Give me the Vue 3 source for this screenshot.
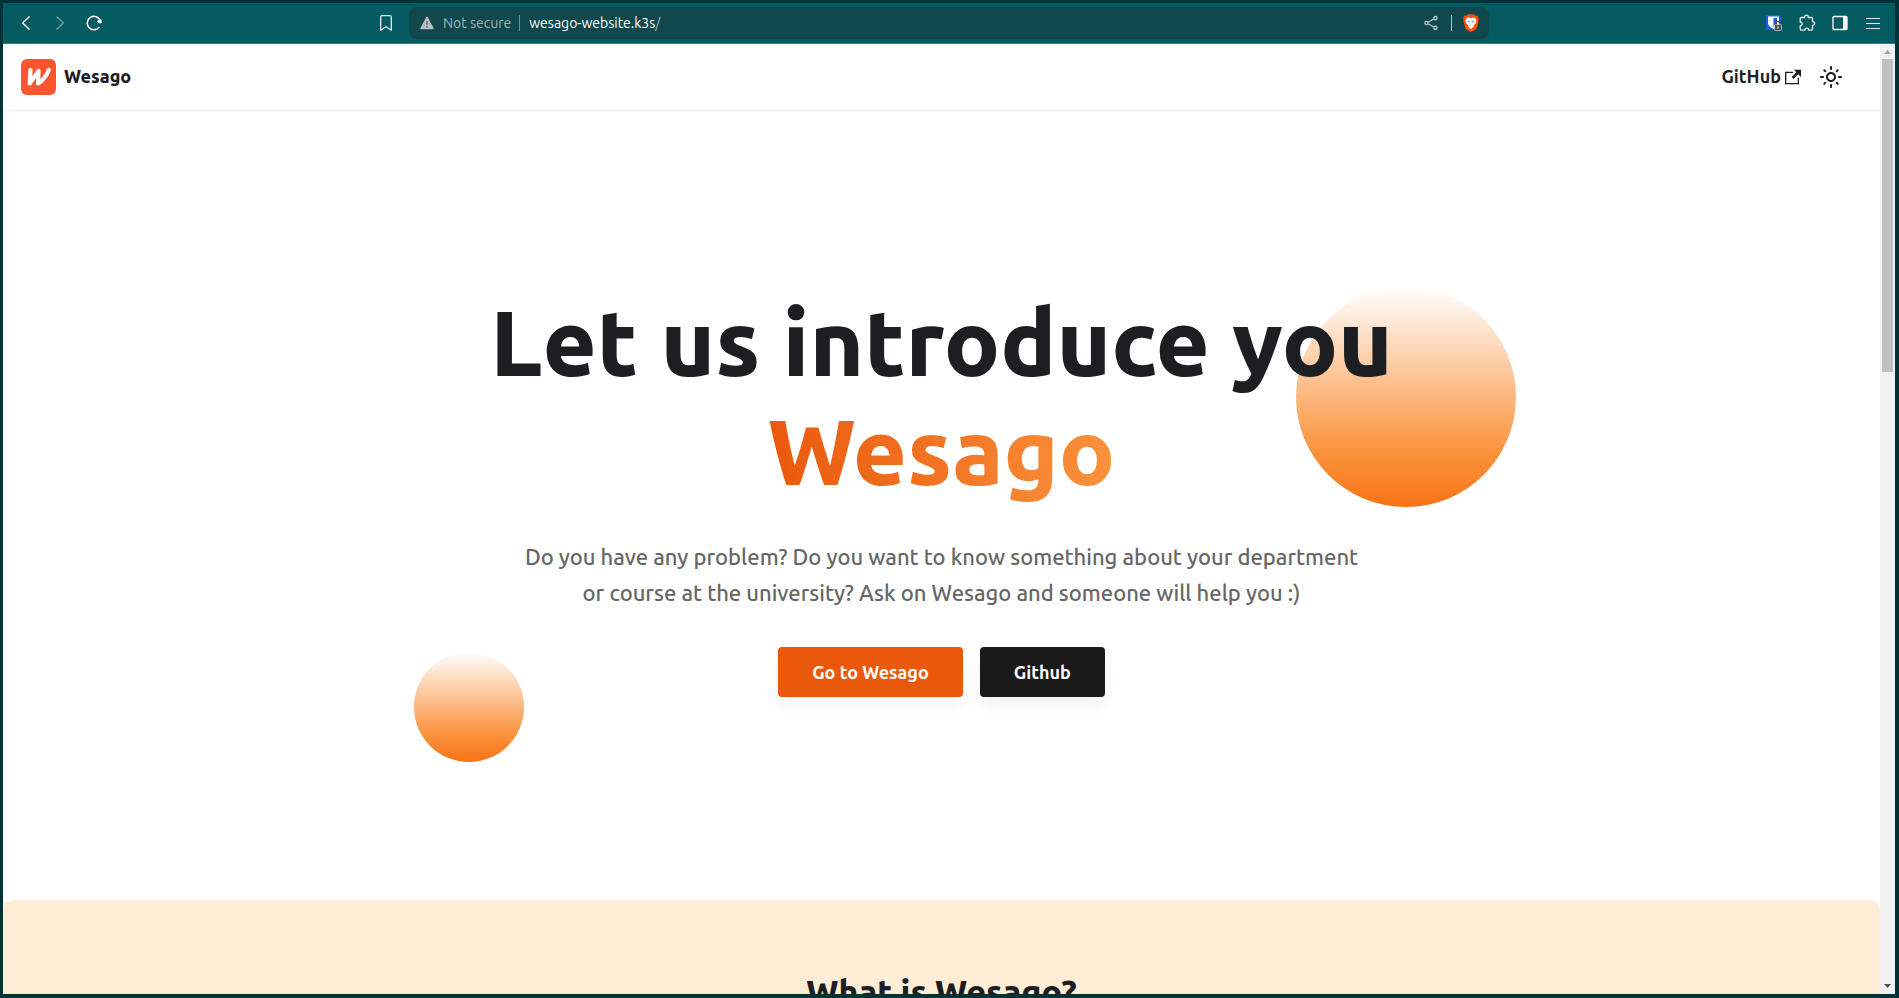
<script setup>
const pageTitle = 'Wesago'
const intro =
  'Do you have any problem? Do you want to know something about your department or course at the university? Ask on Wesago and someone will help you :)'
</script>

<template>
  <div class="window">
    <div class="toolbar">
      <div class="nav">
        <button type="button" aria-label="Back">
          <svg width="16" height="16" viewBox="0 0 16 16"><path d="M11.500 1.500 4.700 8l6.800 6.500" fill="none" stroke="#fff" stroke-width="1.500" /></svg>
        </button>
        <button type="button" aria-label="Forward" disabled>
          <svg width="16" height="16" viewBox="0 0 16 16"><path d="M4.500 1.500 11.300 8l-6.800 6.500" fill="none" stroke="#6f9da1" stroke-width="1.500" /></svg>
        </button>
        <button type="button" aria-label="Reload">
          <svg width="16" height="16" viewBox="0 0 16 16">
            <path d="M14.200 5.600A6.700 6.700 0 1 0 13.200 12.300" fill="none" stroke="#fff" stroke-width="1.500" />
            <path d="M11.500 6 14.800 4.300l.5 3.400-2.300.3z" fill="#fff" stroke="#fff" stroke-linejoin="round" />
          </svg>
        </button>
      </div>

      <div class="address-group">
        <button type="button" class="bookmark" aria-label="Bookmark this tab">
          <svg width="14" height="18" viewBox="0 0 14 18"><path d="M1.700 2.700q0-1 1-1h8.600q1 0 1 1v13.500L7 12.800l-5.300 3.400z" fill="none" stroke="#e4eeee" stroke-width="1.300" stroke-linejoin="round" /></svg>
        </button>
        <div class="address">
          <svg class="warn" width="14" height="14" viewBox="0 0 14 14">
            <path d="M7 1.400 13 12.500H1z" fill="#b9bfc0" stroke="#b9bfc0" stroke-width="1.500" stroke-linejoin="round" />
            <path d="M7 5v3.800M7 9.900v1.500" stroke="#5a6568" stroke-width="1.500" />
          </svg>
          <span class="insecure">Not secure</span>
          <span class="bar"></span>
          <span class="url">wesago-website.k3s<i>/</i></span>
          <button type="button" aria-label="Share">
            <svg width="14" height="16" viewBox="0 0 14 16" fill="none" stroke="#b7c6c8" stroke-width="1.300">
              <path d="M4 7.300 9.700 4M4 8.700l5.700 3.300" />
              <circle cx="2.400" cy="8" r="1.600" /><circle cx="11.400" cy="3.200" r="1.700" /><circle cx="11.400" cy="12.800" r="1.700" />
            </svg>
          </button>
          <span class="bar pale"></span>
          <button type="button" aria-label="Brave Shields">
            <svg width="16" height="18" viewBox="0 0 16 18">
              <path d="M5 .3h6l1.500 1.500 1.800-.3L15.900 4l-.5 1.300.4 1.300-1.900 7.200Q13.300 15 12 15.900L8 18l-4-2.100Q2.700 15 2.100 13.800L.2 6.600l.4-1.300L.1 4l1.600-2.500 1.800.3z" fill="#fb4f0b" />
              <path d="M4.600 3.500 8 4.100l3.400-.6 2.200 2.700-.7 1.500.3 1.400-2.600 2.500.3 1-2.900 2.700-2.900-2.700.3-1-2.600-2.500.3-1.400-.7-1.500z" fill="#fff" />
              <path d="m4.400 6.800 2.500.5-.4 1.500zM11.600 6.800l-2.500.5.4 1.500zM6.500 10.800l1.500.6 1.500-.6L8 12z" fill="#fb4f0b" />
            </svg>
          </button>
        </div>
      </div>

      <div class="extensions">
        <button type="button" aria-label="Password manager">
          <svg width="18" height="18" viewBox="0 0 18 18">
            <rect x="1" y="1" width="15" height="15" rx="1" fill="#175ddc" />
            <path d="M3 2.500h11V9c0 3-3 4.700-5.500 6C6 13.700 3 12 3 9z" fill="#fff" />
            <path d="M8.500 4H12v5c0 1.700-1.500 2.700-3.500 4z" fill="#175ddc" />
            <rect x="9.500" y="10.500" width="7" height="6" rx="1" fill="#505050" stroke="#ddd" stroke-width=".7" />
            <path d="M11.200 10.300V9.200a1.800 1.800 0 0 1 3.600 0v1.100" fill="none" stroke="#505050" stroke-width="1.300" />
            <path d="M13 12.500v2" stroke="#fff" />
          </svg>
        </button>
        <button type="button" aria-label="Extensions">
          <svg width="18" height="18" viewBox="0 0 18 18">
            <path d="M2.200 4.500q0-1 1-1h3.300c-.4-3 4.200-3 3.800 0h3.200q1 0 1 1v3.200c2.800-.1 2.800 3.800 0 3.700v3.700q0 1-1 1H10.700c.3-2.700-4-2.700-3.700 0H3.200q-1 0-1-1v-3.300c2.600.1 2.600-3.900 0-3.800z" fill="none" stroke="#e3eeee" stroke-width="1.300" stroke-linejoin="round" />
          </svg>
        </button>
        <button type="button" aria-label="Sidebar">
          <svg width="16" height="16" viewBox="0 0 16 16"><rect x="1" y="1.500" width="14" height="13" rx="1" fill="none" stroke="#fff" stroke-width="1.300" /><path d="M11 1h4v14h-4z" fill="#fff" /></svg>
        </button>
        <button type="button" aria-label="Menu">
          <svg width="14" height="14" viewBox="0 0 14 14"><path d="M0 2.500h14M0 7.500h14M0 12.500h14" stroke="#dbe8e9" stroke-width="1" /></svg>
        </button>
      </div>
    </div>

    <div class="viewport">
      <div class="page">
        <header class="site-header">
          <a class="brand" href="#">
            <svg width="35" height="36" viewBox="0 0 35 36">
              <rect width="35" height="36" rx="6" fill="#ff5630" />
              <path d="M9.500 11 8.600 24.500 17.500 12l-.4 12.500Q24 20.500 27.800 11" fill="none" stroke="#fff" stroke-width="4.200" stroke-linecap="round" stroke-linejoin="round" />
            </svg>
            <b>{{ pageTitle }}</b>
          </a>
          <nav>
            <a class="repo" href="#">
              <span>GitHub</span>
              <svg width="16" height="16" viewBox="0 0 24 24"><path fill="currentColor" d="M21 13v10h-21v-19h12v2h-10v15h17v-8h2zm3-12h-10.988l4.035 4-6.977 7.070 2.828 2.828 6.977-7.070 4.125 4.172v-11z" /></svg>
            </a>
            <button type="button" class="theme" aria-label="Switch between dark and light mode">
              <svg width="24" height="24" viewBox="0 0 24 24"><path fill="currentColor" d="M12,9c1.650,0,3,1.350,3,3s-1.350,3-3,3s-3-1.350-3-3S10.350,9,12,9 M12,7c-2.760,0-5,2.240-5,5s2.240,5,5,5s5-2.240,5-5 S14.760,7,12,7L12,7z M2,13l2,0c0.550,0,1-0.450,1-1s-0.450-1-1-1l-2,0c-0.550,0-1,0.450-1,1S1.450,13,2,13z M20,13l2,0c0.550,0,1-0.450,1-1 s-0.450-1-1-1l-2,0c-0.550,0-1,0.450-1,1S19.450,13,20,13z M11,2v2c0,0.550,0.450,1,1,1s1-0.450,1-1V2c0-0.550-0.450-1-1-1S11,1.450,11,2z M11,20v2c0,0.550,0.450,1,1,1s1-0.450,1-1v-2c0-0.550-0.450-1-1-1C11.450,19,11,19.450,11,20z M5.990,4.580c-0.390-0.390-1.030-0.390-1.410,0 c-0.390,0.390-0.390,1.030,0,1.410l1.060,1.060c0.390,0.390,1.030,0.390,1.410,0s0.390-1.030,0-1.410L5.990,4.580z M18.360,16.950 c-0.390-0.390-1.030-0.390-1.410,0c-0.390,0.390-0.390,1.030,0,1.410l1.060,1.060c0.390,0.390,1.030,0.390,1.410,0c0.390-0.390,0.390-1.030,0-1.410 L18.360,16.950z M19.420,5.990c0.390-0.390,0.390-1.030,0-1.410c-0.390-0.390-1.030-0.390-1.410,0l-1.060,1.060c-0.390,0.390-0.390,1.030,0,1.410 s1.030,0.390,1.410,0L19.420,5.990z M7.050,18.360c0.390-0.390,0.390-1.030,0-1.410c-0.390-0.390-1.030-0.390-1.410,0l-1.060,1.060 c-0.390,0.390-0.390,1.030,0,1.410s1.030,0.390,1.410,0L7.050,18.360z" /></svg>
            </button>
          </nav>
        </header>

        <main>
          <section class="hero">
            <span class="ball large"></span>
            <span class="ball small"></span>
            <h1>Let us introduce you<br /><em>{{ pageTitle }}</em></h1>
            <p>{{ intro }}</p>
            <div class="actions">
              <a class="button primary" href="#">Go to Wesago</a>
              <a class="button dark" href="#">Github</a>
            </div>
          </section>
          <section class="about">
            <h2>What is Wesago?</h2>
          </section>
        </main>
      </div>

      <div class="scrollbar" aria-hidden="true">
        <svg width="15" height="15" viewBox="0 0 15 15"><path d="M4 10l3.500-4L11 10z" fill="#a3a3a3" /></svg>
        <span class="track"><span class="thumb"></span></span>
        <svg width="15" height="15" viewBox="0 0 15 15"><path d="M4 5h7l-3.500 4z" fill="#505050" /></svg>
      </div>
    </div>
  </div>
</template>

<style>
body {
  margin: 0;
}
</style>

<style scoped>
.window {
  box-sizing: border-box;
  display: flex;
  flex-direction: column;
  height: 100vh;
  padding: 3px 4px 4px 3px;
  overflow: hidden;
  background: #003338;
  color: #1c1e21;
  font-family: Ubuntu, "Noto Sans", sans-serif;
  font-weight: 450;
}

button {
  display: flex;
  padding: 0;
  border: 0;
  background: none;
  color: inherit;
  font: inherit;
}

a {
  color: inherit;
  text-decoration: none;
}

.toolbar {
  display: flex;
  flex: none;
  align-items: center;
  justify-content: space-between;
  height: 40px;
  padding: 0 13px 0 15px;
  border-bottom: 1px solid #367b82;
  background: #045b62;
  color: #fff;
}

.nav {
  display: flex;
  flex: 1;
  gap: 18px;
}

.address-group {
  display: flex;
  flex: 0 1 1110px;
  align-items: center;
  gap: 16px;
  margin-right: 32px;
}

.address {
  box-sizing: border-box;
  display: flex;
  flex: 1;
  align-items: center;
  height: 32px;
  padding: 0 10px 0 11px;
  border-radius: 8px;
  background: #10484e;
  font-size: 14px;
}

.warn {
  margin-right: 9px;
}

.insecure {
  color: #a5b3b5;
}

.bar {
  width: 1px;
  height: 16px;
  margin: 0 9px 0 8px;
  background: #6f9092;
}

.bar.pale {
  margin: 0 11px 0 13px;
  background: #b4c4c5;
}

.url {
  flex: 1;
}

.url i {
  color: #a5b3b5;
  font-style: normal;
}

.extensions {
  display: flex;
  flex: 1;
  align-items: center;
  justify-content: flex-end;
  gap: 15px;
}

.extensions button {
  justify-content: center;
  width: 18px;
}

.viewport {
  display: flex;
  flex: 1;
  min-height: 0;
  background: #fff;
}

.page {
  flex: 1;
  overflow: hidden;
}

.site-header {
  position: relative;
  display: flex;
  align-items: center;
  justify-content: space-between;
  height: 66px;
  padding: 0 37px 0 18px;
  box-shadow: 0 1px 2px #0000001a;
  font-size: 18px;
}

.brand,
.site-header nav,
.repo {
  display: flex;
  align-items: center;
}

.brand {
  gap: 8px;
}

.brand b,
.repo span {
  padding-bottom: 2px;
}

.brand b {
  font-weight: 800;
}

.site-header nav {
  gap: 18px;
}

.repo {
  gap: 4px;
  font-weight: 600;
}

.hero {
  position: relative;
  display: flex;
  flex-direction: column;
  align-items: center;
  padding: 177px 24px 203px;
  text-align: center;
}

.ball {
  position: absolute;
  border-radius: 50%;
  background: linear-gradient(to top, #f97316, #fb923c 25%, #fff);
}

.ball.large {
  top: 177px;
  left: calc(50% + 354px);
  width: 220px;
  height: 220px;
}

.ball.small {
  top: 542px;
  left: calc(50% - 528px);
  width: 110px;
  height: 110px;
}

h1,
h2,
p {
  margin: 0;
}

h1 {
  position: relative;
  font-size: 93px;
  font-weight: 800;
  line-height: 109px;
}

h1 em {
  background: linear-gradient(to right, #ea580c, #fb923c);
  background-clip: text;
  color: transparent;
  font-style: normal;
}

.hero p {
  max-width: 840px;
  margin-top: 34px;
  color: #666;
  font-size: 22px;
  font-weight: 500;
  line-height: 36px;
}

.actions {
  display: flex;
  gap: 17px;
  margin-top: 36px;
}

.button {
  padding: 0 34px;
  border-radius: 4px;
  box-shadow: 0 10px 15px #0000000d;
  color: #fff;
  font-size: 18px;
  font-weight: 600;
  line-height: 50px;
}

.primary {
  background: #ea580c;
}

.dark {
  background: #1a1a1a;
}

.about {
  padding: 71px 24px;
  border-radius: 10px 10px 0 0;
  background: #ffedd5;
  text-align: center;
}

h2 {
  font-size: 34px;
  font-weight: 800;
  line-height: 40px;
}

.scrollbar {
  display: flex;
  flex: 0 0 15px;
  flex-direction: column;
  background: #f1f1f1;
}

.scrollbar svg {
  flex: none;
}

.track {
  flex: 1;
  padding: 0 2px;
}

.thumb {
  display: block;
  height: 34%;
  background: #c1c1c1;
}
</style>
